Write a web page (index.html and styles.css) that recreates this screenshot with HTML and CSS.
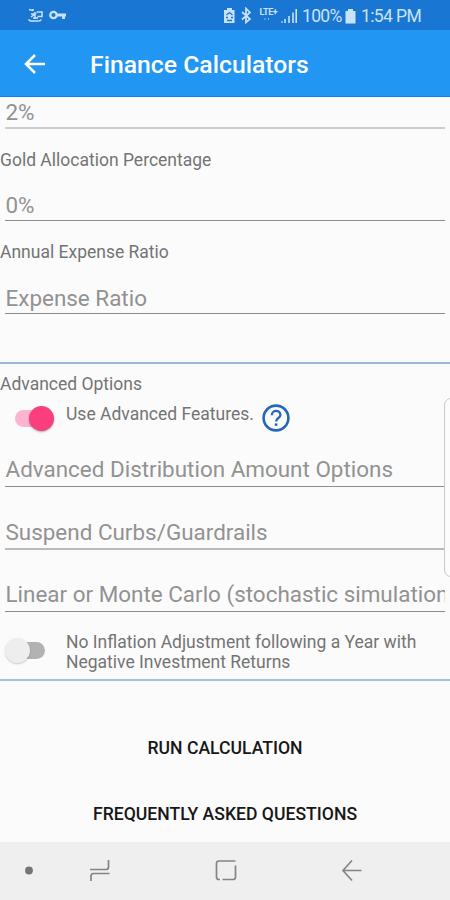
FILE: index.html
```html
<!DOCTYPE html>
<html lang="en">
<head>
<meta charset="utf-8">
<title>Finance Calculators</title>
<link rel="stylesheet" href="styles.css">
</head>
<body>
<div class="screen">
  <div class="status">
    <svg class="status-left" width="42" height="18" viewBox="0 0 42 18" fill="none" stroke="currentColor">
      <path d="M2 2.500l4 1M6 2v2M8 5v7M4 7h4l-4 3M9.500 5H15v4.500h-4.500M1.500 12.500c2 2.500 4 1.500 5.500 1.500h4c2 0 3-.5 3.500-1.500M6 11h5" stroke-width="1.500"/>
      <circle cx="26.500" cy="8" r="3.200" stroke-width="2.300"/><path d="M30 8h9M36.500 8v4" stroke-width="2.800"/>
    </svg>
    <div class="status-right">
      <svg width="74" height="18" viewBox="0 0 74 18" fill="none" stroke="currentColor">
        <path d="M4 1h5v2h2.500v13H1V3h3z" fill="currentColor" stroke="none"/>
        <path d="M3.500 8l3-2.500L9.500 8M3 10.500h2m3 0h2M4 13.500h5" stroke="#1976d2" stroke-width="1.300"/>
        <path d="M19 5l8 7-4 3.500v-14L27 5.500l-8 7" stroke-width="1.700"/>
        <text class="lte" x="36.500" y="8">LTE+</text>
        <path d="M42 11v2M45.500 11v2" stroke-width="1" opacity=".6"/>
        <path d="M62 12v4M66 9v7M70 5.500V16M73.200 2v14" stroke-width="1.600"/>
        <path d="M59 14v2" stroke-width="1.600" opacity=".7"/>
      </svg>
      <span class="percent">100%</span>
      <svg class="battery" width="11" height="16" viewBox="0 0 11 16"><path d="M3 1h5v2h2.500v12.500H.5V3H3z" fill="currentColor"/></svg>
      <span class="clock">1:54 PM</span>
    </div>
  </div>
  <header class="appbar">
    <svg width="22" height="22" viewBox="0 0 22 22" fill="none" stroke="currentColor" stroke-width="2.500"><path d="M21 11H3M11 2L2 11l9 9"/></svg>
    <h1>Finance Calculators</h1>
  </header>
  <main class="form">
    <div class="field first">2%</div>
    <div class="label l-gold">Gold Allocation Percentage</div>
    <div class="field">0%</div>
    <div class="label">Annual Expense Ratio</div>
    <div class="field">Expense Ratio</div>
    <section class="advanced">
      <div class="label heading">Advanced Options</div>
      <div class="option">
        <div class="switch on"><i></i></div>
        <span class="option-text">Use Advanced Features.</span>
        <svg class="help" width="28" height="28" viewBox="0 0 28 28" fill="none" stroke="#2468bd"><circle cx="14" cy="14" r="12.400" stroke-width="2.600"/><path d="M9.800 11.200c0-5.600 8.600-5.600 8.600-.3 0 3.100-4.300 3.100-4.300 6.600" stroke-width="2.300"/><path d="M14.100 19.400v2.500" stroke-width="2.600"/></svg>
      </div>
      <div class="field amount">Advanced Distribution Amount Options</div>
      <div class="field suspend">Suspend Curbs/Guardrails</div>
      <div class="field linear">Linear or Monte Carlo (stochastic simulation</div>
      <div class="option inflation">
        <div class="switch"><i></i></div>
        <div class="option-text">No Inflation Adjustment following a Year with<br>Negative Investment Returns</div>
      </div>
    </section>
    <button class="action run">RUN CALCULATION</button>
    <button class="action">FREQUENTLY ASKED QUESTIONS</button>
    <div class="edge-panel"></div>
  </main>
  <nav class="nav">
    <svg width="450" height="58" viewBox="0 0 450 58" fill="none" stroke="#858585" stroke-width="1.700">
      <circle cx="29" cy="28.500" r="3.900" fill="#747474" stroke="none"/>
      <path d="M90 27.500h16q2.500 0 2.500-2.500v-7M109.500 31.500H93.500q-2.500 0-2.500 2.500V39"/>
      <path d="M220 37.500h-1q-2.500 0-2.500-2.500V21.500q0-2.500 2.500-2.500H235.500M235.500 23.500V35q0 2.500-2.500 2.500h-10.500"/>
      <path d="M361.500 28.500h-18M352 18.500l-9 10 9 10"/>
    </svg>
  </nav>
</div>
</body>
</html>
```
FILE: styles.css
```css
* { box-sizing: border-box; }
body { margin: 0; font-family: Roboto, sans-serif; background: #fbfbfb; }
.screen { width: 450px; height: 900px; display: flex; flex-direction: column; overflow: hidden; }
.status { height: 30px; flex: none; background: #1976d2; color: #c9e3fb; display: flex; justify-content: space-between; padding: 7px 29px 0 27px; }
.status-right { display: flex; align-items: flex-start; }
.lte { font: 700 9px Roboto, sans-serif; fill: currentColor; stroke: none; letter-spacing: -.4px; }
.percent, .clock { font-size: 17.500px; line-height: 19px; white-space: nowrap; }
.percent { width: 39px; margin-left: 5px; letter-spacing: -.7px; }
.battery { margin: 1px 5px 0 4px; }
.clock { width: 60px; letter-spacing: -.6px; }
.appbar { height: 67px; flex: none; background: #2196f3; border-bottom: 1px solid #1384e2; color: #fff; display: flex; align-items: center; padding: 1px 0 0 24px; }
h1 { margin: 2px 0 0 44px; font-size: 24.750px; font-weight: 500; line-height: 28px; white-space: nowrap; }
.form { height: 745px; flex: none; position: relative; display: flex; flex-direction: column; }
.field { height: 47px; flex: none; margin: 0 5px; padding: 0 0 1px .5px; border-bottom: 1px solid #8c8c8c; font-size: 22.450px; line-height: 28px; color: #929292; display: flex; align-items: flex-end; overflow: hidden; white-space: nowrap; }
.field.first { height: 32px; border-bottom: 2px solid #cdcdcd; }
.label { height: 46px; flex: none; display: flex; align-items: center; padding-top: 15px; font-size: 17.500px; color: #747474; white-space: nowrap; }
.l-gold { height: 45px; padding-top: 16px; }
.advanced { margin-top: 48px; height: 319px; flex: none; border-top: 2px solid #9bb9d9; border-bottom: 2px solid #9fc0dd; display: flex; flex-direction: column; }
.heading { height: 37px; padding-top: 3px; }
.option { height: 32px; flex: none; display: flex; font-size: 17.500px; line-height: 20px; color: #747474; }
.option-text { width: 196px; margin-left: -1px; white-space: nowrap; padding-top: 3px; }
.switch { width: 67px; flex: none; height: 26px; position: relative; }
.switch::before { content: ""; position: absolute; left: 13px; top: 4px; width: 32px; height: 17px; border-radius: 9px; background: #b2b2b2; }
.switch i { position: absolute; left: 5px; top: 0; width: 25px; height: 25px; border-radius: 50%; background: #eee; box-shadow: 0 1px 2px #0003; }
.on::before { left: 15px; top: 9px; background: #fdb4ce; }
.on i { left: 29px; top: 5px; background: #fb3e7e; box-shadow: 0 1px 2px #0005; }
.help { margin-top: 3px; }
.amount { height: 54px; padding-bottom: 3px; }
.suspend { height: 63px; border-bottom: 2px solid #bababa; padding-bottom: 2px; }
.linear { height: 62px; padding-bottom: 3px; }
.inflation { height: 67px; padding-top: 26px; }
.inflation .option-text { width: 370px; margin-top: -5px; padding: 0; line-height: 19.500px; }
.action { border: 0; background: none; padding: 0; height: 66px; flex: none; font: 500 17.600px/20px Roboto, sans-serif; color: #171717; white-space: nowrap; }
.run { margin-top: 34px; }
.edge-panel { position: absolute; right: -8px; top: 301px; width: 14px; height: 179px; border: 1px solid #c9c9c9; border-radius: 7px; background: #fcfcfc; }
.nav { height: 58px; flex: none; background: #efefef; }
.nav svg { display: block; }
```
